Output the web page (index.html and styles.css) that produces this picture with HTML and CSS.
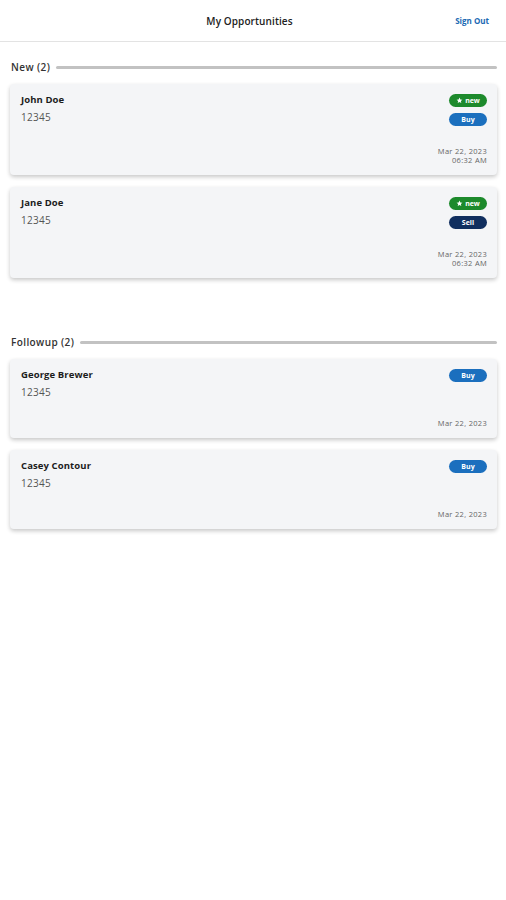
FILE: index.html
```html
<!DOCTYPE html>
<html>
<head>
<meta charset="utf-8">
<link rel="stylesheet" href="styles.css">
</head>
<body>
<header class="topbar">
  <div class="title">My Opportunities</div>
  <a class="signout">Sign Out</a>
</header>
<main class="content">
  <section class="section">
    <div class="section-head"><span class="section-label">New (2)</span><span class="rule"></span></div>
    <div class="cards">
      <div class="card">
        <div class="card-top">
          <div class="who"><div class="name">John Doe</div><div class="num">12345</div></div>
          <div class="badges">
            <span class="badge badge-new"><svg class="star" viewBox="0 0 24 24"><path d="M12 2l2.9 6.6 7.1.6-5.4 4.7 1.6 7-6.2-3.7-6.2 3.7 1.6-7L2 9.2l7.1-.6z" fill="#fff"/></svg>new</span>
            <span class="badge badge-buy">Buy</span>
          </div>
        </div>
        <div class="date">Mar 22, 2023<br>06:32 AM</div>
      </div>
      <div class="card">
        <div class="card-top">
          <div class="who"><div class="name">Jane Doe</div><div class="num">12345</div></div>
          <div class="badges">
            <span class="badge badge-new"><svg class="star" viewBox="0 0 24 24"><path d="M12 2l2.9 6.6 7.1.6-5.4 4.7 1.6 7-6.2-3.7-6.2 3.7 1.6-7L2 9.2l7.1-.6z" fill="#fff"/></svg>new</span>
            <span class="badge badge-sell">Sell</span>
          </div>
        </div>
        <div class="date">Mar 22, 2023<br>06:32 AM</div>
      </div>
    </div>
  </section>
  <section class="section section-followup">
    <div class="section-head"><span class="section-label">Followup (2)</span><span class="rule"></span></div>
    <div class="cards">
      <div class="card">
        <div class="card-top">
          <div class="who"><div class="name">George Brewer</div><div class="num">12345</div></div>
          <div class="badges"><span class="badge badge-buy">Buy</span></div>
        </div>
        <div class="date">Mar 22, 2023</div>
      </div>
      <div class="card">
        <div class="card-top">
          <div class="who"><div class="name">Casey Contour</div><div class="num">12345</div></div>
          <div class="badges"><span class="badge badge-buy">Buy</span></div>
        </div>
        <div class="date">Mar 22, 2023</div>
      </div>
    </div>
  </section>
</main>
</body>
</html>
```

FILE: styles.css
```css
* { box-sizing: border-box; }
html, body { margin: 0; padding: 0; background: #fff; }
body { font-family: "Open Sans", "Noto Sans", sans-serif; color: #1f1f1f; width: 506px; }

.topbar {
  height: 42px;
  border-bottom: 1px solid #e3e3e3;
  display: grid;
  grid-template-columns: 1fr auto 1fr;
  align-items: center;
  padding: 0 17px 0 10px;
}
.title { grid-column: 2; font-size: 10px; font-weight: 600; color: #222; letter-spacing: 0.1px; }
.signout { grid-column: 3; justify-self: end; font-size: 8px; font-weight: 700; color: #1b69b3; }

.content { padding: 0 9px 20px 10px; }
.section { padding-top: 18px; }
.section-followup { padding-top: 57px; }

.section-head { display: flex; align-items: center; height: 14px; margin-bottom: 10px; padding-left: 1px; }
.section-label { font-size: 10px; font-weight: 600; color: #333; white-space: nowrap; letter-spacing: 0.4px; }
.rule { flex: 1; height: 3px; background: #c2c2c2; border-radius: 2px; margin-left: 6px; }

.cards { display: flex; flex-direction: column; gap: 12px; }
.card {
  background: #f4f5f7;
  border-radius: 4px;
  box-shadow: 0 2px 4px rgba(0,0,0,0.22);
  padding: 10px 10px 10px 11px;
}
.card-top { display: flex; justify-content: space-between; align-items: flex-start; }
.name { font-size: 9.5px; font-weight: 700; line-height: 12px; color: #1c1c1c; letter-spacing: 0.1px; }
.num { font-size: 10px; line-height: 12px; margin-top: 5px; color: #555; letter-spacing: 0.3px; }
.badges { display: flex; flex-direction: column; align-items: flex-end; gap: 6px; }
.badge {
  width: 38px; height: 13px; border-radius: 7px;
  display: flex; align-items: center; justify-content: center;
  color: #fff; font-size: 7px; font-weight: 700; line-height: 1;
}
.star { width: 7px; height: 7px; margin-right: 2px; }
.badge-new { background: #1d8a2c; }
.badge-buy { background: #1b6fbe; }
.badge-sell { background: #112f5f; }
.date { text-align: right; font-size: 7.5px; line-height: 9px; color: #666; margin-top: 21px; letter-spacing: 0.3px; }
```
